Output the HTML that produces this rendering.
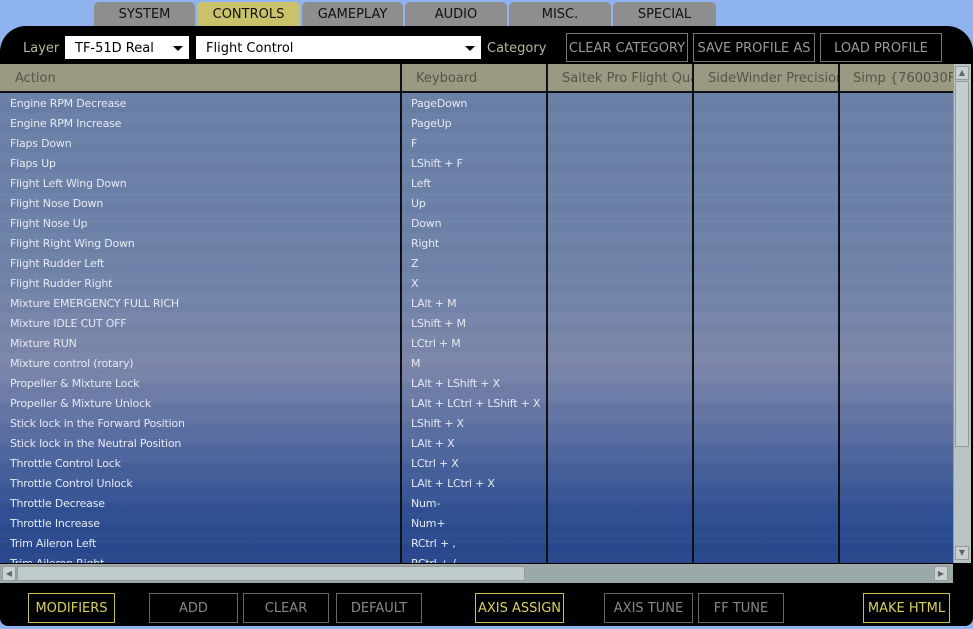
<!DOCTYPE html>
<html><head><meta charset="utf-8"><style>
*{margin:0;padding:0;box-sizing:border-box}
body{width:973px;height:629px;overflow:hidden;background:#8eb3ee;font-family:"DejaVu Sans","Liberation Sans",sans-serif;position:relative}
.tab{position:absolute;top:2px;height:24px;background:#8e8e8e;border-radius:5px 5px 0 0;font-size:13px;color:#111;text-align:center;line-height:25px}
.panel{position:absolute;left:0;top:26px;width:973px;height:600px;background:#000;border-radius:26px 26px 8px 8px}
.sel{position:absolute;top:36px;height:23px;background:#fff;font-size:13px;line-height:25px;padding-left:10px;color:#000}
.sel:after{content:"";position:absolute;right:6px;top:10px;border-left:5px solid transparent;border-right:5px solid transparent;border-top:5px solid #000}
.lbl{position:absolute;top:36px;font-size:13px;line-height:25px;color:#b8b8a0}
.btn{position:absolute;border:1px solid #777;color:#999;font-size:13px;text-align:center}
.hdr{position:absolute;top:64px;height:29px;background:#9a9a82;border-bottom:2px solid #111;font-size:13px;color:#555548;line-height:29px;white-space:nowrap;overflow:hidden}
.rows{position:absolute;left:0;top:93px;width:953px;height:470px;overflow:hidden;background:linear-gradient(#697fa7 0%,#6e82a9 35%,#7c87ab 58%,#5a6ea2 72%,#2e4e92 90%,#28468c 100%)}
.r{height:20px;position:relative;background:linear-gradient(rgba(255,255,255,0.015) 50%,rgba(0,0,0,0.015) 50%);font-size:11px;color:#e6e9f2;line-height:22px;letter-spacing:-0.2px}
.r span{position:absolute;top:0}
.vl{position:absolute;top:64px;width:2px;height:499px;background:#111}
.bb{position:absolute;top:593px;height:30px;border:1px solid #666;color:#888;font-size:13px;line-height:30px;text-align:center}
.y{border-color:#c8c050;color:#d8d060}
</style></head><body>
<div class="tab" style="left:94px;width:101px">SYSTEM</div>
<div class="tab" style="left:197px;width:103px;background:#c9c26a">CONTROLS</div>
<div class="tab" style="left:302px;width:101px">GAMEPLAY</div>
<div class="tab" style="left:405px;width:102px">AUDIO</div>
<div class="tab" style="left:509px;width:102px">MISC.</div>
<div class="tab" style="left:613px;width:103px">SPECIAL</div>
<div class="panel"></div>
<div class="lbl" style="left:23px">Layer</div>
<div class="sel" style="left:65px;width:124px">TF-51D Real</div>
<div class="sel" style="left:196px;width:285px">Flight Control</div>
<div class="lbl" style="left:487px">Category</div>
<div class="btn" style="left:566px;top:33px;width:122px;height:29px;line-height:29px">CLEAR CATEGORY</div>
<div class="btn" style="left:693px;top:33px;width:122px;height:29px;line-height:29px">SAVE PROFILE AS</div>
<div class="btn" style="left:820px;top:33px;width:122px;height:29px;line-height:29px">LOAD PROFILE</div>
<div class="rows">
<div class="r"><span style="left:10px">Engine RPM Decrease</span><span style="left:411px">PageDown</span></div>
<div class="r"><span style="left:10px">Engine RPM Increase</span><span style="left:411px">PageUp</span></div>
<div class="r"><span style="left:10px">Flaps Down</span><span style="left:411px">F</span></div>
<div class="r"><span style="left:10px">Flaps Up</span><span style="left:411px">LShift + F</span></div>
<div class="r"><span style="left:10px">Flight Left Wing Down</span><span style="left:411px">Left</span></div>
<div class="r"><span style="left:10px">Flight Nose Down</span><span style="left:411px">Up</span></div>
<div class="r"><span style="left:10px">Flight Nose Up</span><span style="left:411px">Down</span></div>
<div class="r"><span style="left:10px">Flight Right Wing Down</span><span style="left:411px">Right</span></div>
<div class="r"><span style="left:10px">Flight Rudder Left</span><span style="left:411px">Z</span></div>
<div class="r"><span style="left:10px">Flight Rudder Right</span><span style="left:411px">X</span></div>
<div class="r"><span style="left:10px">Mixture EMERGENCY FULL RICH</span><span style="left:411px">LAlt + M</span></div>
<div class="r"><span style="left:10px">Mixture IDLE CUT OFF</span><span style="left:411px">LShift + M</span></div>
<div class="r"><span style="left:10px">Mixture RUN</span><span style="left:411px">LCtrl + M</span></div>
<div class="r"><span style="left:10px">Mixture control (rotary)</span><span style="left:411px">M</span></div>
<div class="r"><span style="left:10px">Propeller &amp; Mixture Lock</span><span style="left:411px">LAlt + LShift + X</span></div>
<div class="r"><span style="left:10px">Propeller &amp; Mixture Unlock</span><span style="left:411px">LAlt + LCtrl + LShift + X</span></div>
<div class="r"><span style="left:10px">Stick lock in the Forward Position</span><span style="left:411px">LShift + X</span></div>
<div class="r"><span style="left:10px">Stick lock in the Neutral Position</span><span style="left:411px">LAlt + X</span></div>
<div class="r"><span style="left:10px">Throttle Control Lock</span><span style="left:411px">LCtrl + X</span></div>
<div class="r"><span style="left:10px">Throttle Control Unlock</span><span style="left:411px">LAlt + LCtrl + X</span></div>
<div class="r"><span style="left:10px">Throttle Decrease</span><span style="left:411px">Num-</span></div>
<div class="r"><span style="left:10px">Throttle Increase</span><span style="left:411px">Num+</span></div>
<div class="r"><span style="left:10px">Trim Aileron Left</span><span style="left:411px">RCtrl + ,</span></div>
<div class="r"><span style="left:10px">Trim Aileron Right</span><span style="left:411px">RCtrl + /</span></div>
</div>
<div class="hdr" style="left:0;width:401px;padding-left:15px">Action</div>
<div class="hdr" style="left:401px;width:146px;padding-left:15px">Keyboard</div>
<div class="hdr" style="left:547px;width:146px;padding-left:15px">Saitek Pro Flight Quadrant</div>
<div class="hdr" style="left:693px;width:146px;padding-left:15px">SideWinder Precision</div>
<div class="hdr" style="left:839px;width:114px;padding-left:14px">Simp {760030F</div>
<div class="vl" style="left:400px"></div>
<div class="vl" style="left:546px"></div>
<div class="vl" style="left:692px"></div>
<div class="vl" style="left:838px"></div>
<div style="position:absolute;left:953px;top:64px;width:18px;height:499px;background:#b8c4c4;border-left:1px solid #999"></div>
<div style="position:absolute;left:955px;top:66px;width:14px;height:14px;background:#c8d2d2;border:1px solid #999;font-size:8px;color:#666;text-align:center;line-height:12px">▲</div>
<div style="position:absolute;left:955px;top:81px;width:14px;height:366px;background:#c4cece;border:1px solid #999"></div>
<div style="position:absolute;left:955px;top:546px;width:14px;height:14px;background:#c8d2d2;border:1px solid #999;font-size:8px;color:#666;text-align:center;line-height:12px">▼</div>
<div style="position:absolute;left:0;top:564px;width:953px;height:19px;background:#9aaaa8;border-top:1px solid #aaa"></div>
<div style="position:absolute;left:2px;top:566px;width:14px;height:15px;background:#c8d2d2;border:1px solid #999;font-size:8px;color:#666;text-align:center;line-height:13px">◀</div>
<div style="position:absolute;left:17px;top:566px;width:508px;height:15px;background:#c0cccc;border:1px solid #999"></div>
<div style="position:absolute;left:934px;top:566px;width:14px;height:15px;background:#c8d2d2;border:1px solid #999;font-size:8px;color:#666;text-align:center;line-height:13px">▶</div>
<div class="bb y" style="left:28px;width:87px">MODIFIERS</div>
<div class="bb" style="left:149px;width:89px">ADD</div>
<div class="bb" style="left:243px;width:86px">CLEAR</div>
<div class="bb" style="left:336px;width:86px">DEFAULT</div>
<div class="bb y" style="left:475px;width:89px">AXIS ASSIGN</div>
<div class="bb" style="left:604px;width:89px">AXIS TUNE</div>
<div class="bb" style="left:698px;width:86px">FF TUNE</div>
<div class="bb y" style="left:863px;width:87px">MAKE HTML</div>
</body></html>
